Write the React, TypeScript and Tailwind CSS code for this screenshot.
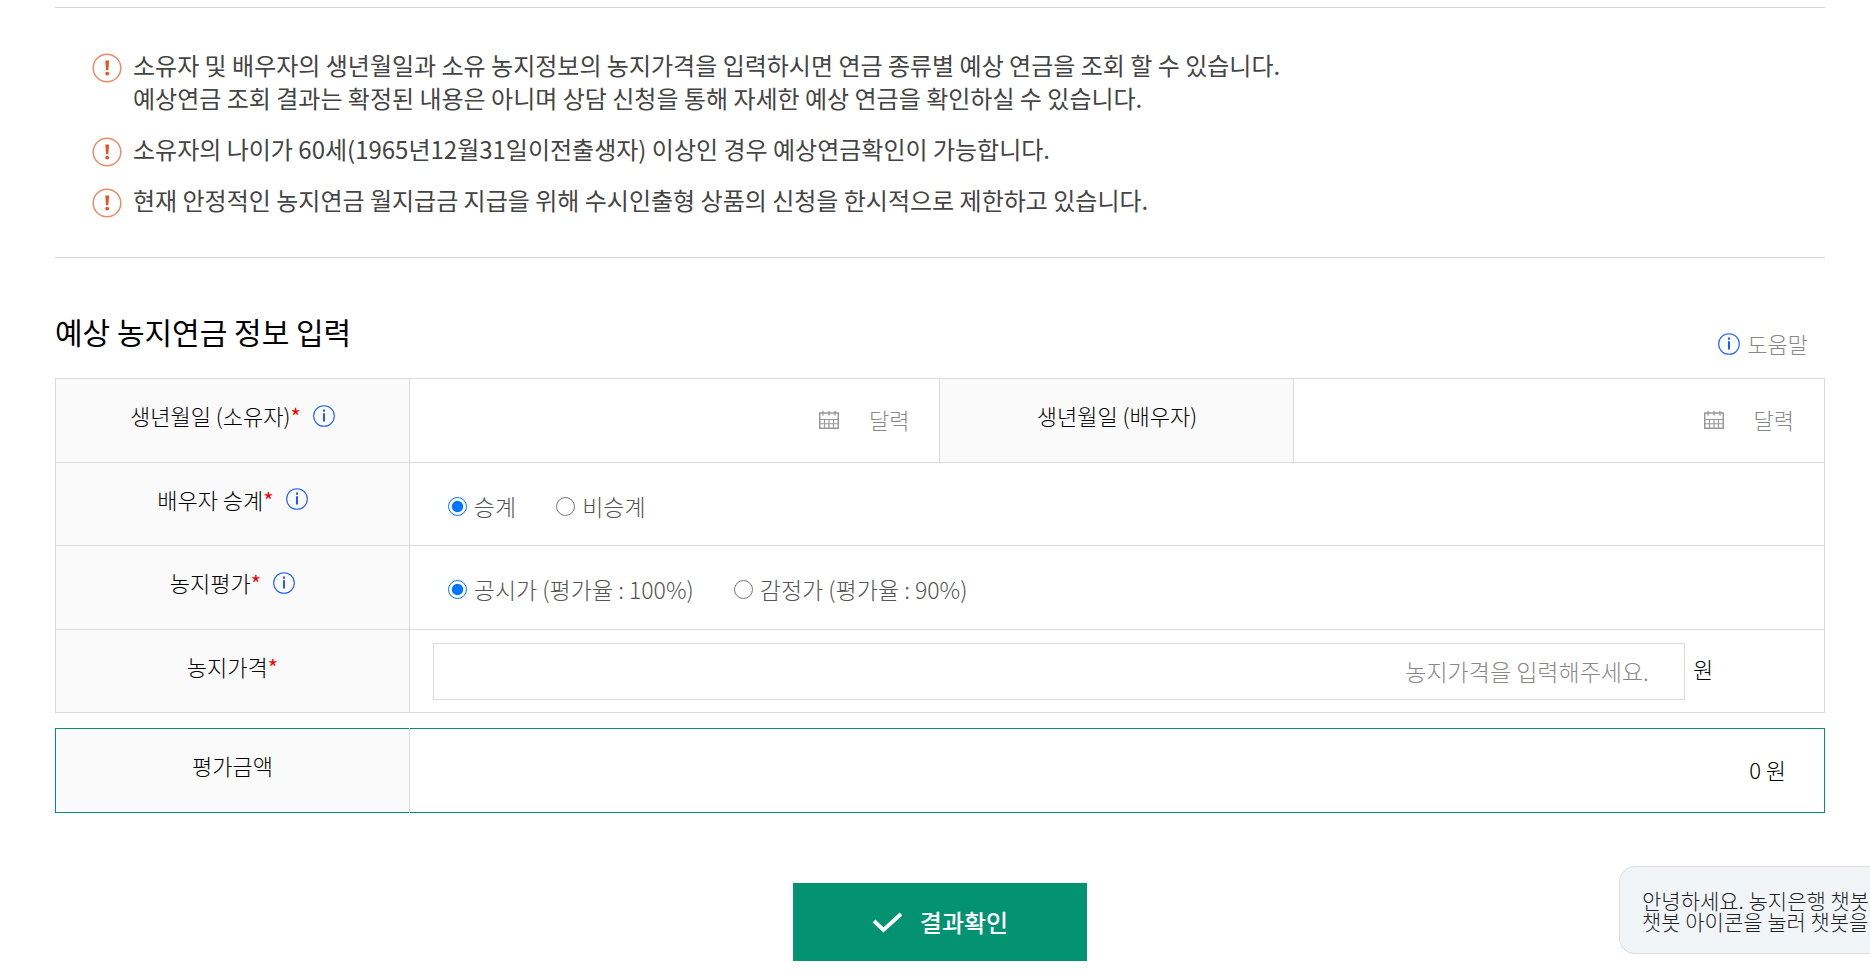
import { useState } from "react";

const notices = [
  [
    "소유자 및 배우자의 생년월일과 소유 농지정보의 농지가격을 입력하시면 연금 종류별 예상 연금을 조회 할 수 있습니다.",
    "예상연금 조회 결과는 확정된 내용은 아니며 상담 신청을 통해 자세한 예상 연금을 확인하실 수 있습니다.",
  ],
  ["소유자의 나이가 60세(1965년12월31일이전출생자) 이상인 경우 예상연금확인이 가능합니다."],
  ["현재 안정적인 농지연금 월지급금 지급을 위해 수시인출형 상품의 신청을 한시적으로 제한하고 있습니다."],
];

function AlertIcon() {
  return (
    <svg viewBox="0 0 30 30" className="mt-[5px] size-[30px] shrink-0" aria-hidden="true">
      <circle cx="15" cy="15" r="13.8" fill="none" stroke="#ee8a68" strokeWidth="1.5" />
      <path d="M13.3 7.5h3.8l-.8 9.8h-2.2z" fill="#e8501e" />
      <circle cx="15.2" cy="20.6" r="1.9" fill="#e8501e" />
    </svg>
  );
}

function InfoIcon() {
  return (
    <svg viewBox="0 0 22 22" className="size-[22px] shrink-0" aria-hidden="true">
      <circle cx="11" cy="11" r="10.3" fill="none" stroke="#1a5cff" strokeWidth="1.1" />
      <path d="M10 4.5h2v2.2h-2zM10 8.2h2v8.3h-2z" fill="#1a5cff" />
    </svg>
  );
}

function CalendarIcon() {
  return (
    <svg viewBox="0 0 20 18" className="h-[18px] w-5" fill="none" stroke="#999" aria-hidden="true">
      <path d="M.75 2h18.5v15.25H.75z" strokeWidth="1.5" />
      <path d="M1 8.5h18M1 12.75h18M5.5 8.5v9M10 8.5v9M14.5 8.5v9" strokeWidth="1.2" />
      <path d="M4 0v4.5M10 0v4.5M16 0v4.5" strokeWidth="1.4" />
    </svg>
  );
}

function Th({ label, required, info }: { label: string; required?: boolean; info?: boolean }) {
  return (
    <th scope="row" className="border border-[#dadada] bg-[#fafafa] px-2 pb-[10px] font-light text-black">
      <div className="flex items-center justify-center">
        <span>{label}</span>
        {required && <span className="font-normal text-[#f00]">*</span>}
        {info && (
          <button type="button" aria-label={`${label} 도움말`} className="ml-3">
            <InfoIcon />
          </button>
        )}
      </div>
    </th>
  );
}

function DateCell({ label }: { label: string }) {
  return (
    <td className="border border-[#dadada] pb-[2px]">
      <div className="flex items-center pr-[30px] pl-6">
        <input type="text" aria-label={label} className="h-14 min-w-0 flex-1 bg-transparent outline-none" />
        <button type="button" className="flex items-center gap-[30px] font-light text-[#888]">
          <CalendarIcon />
          달력
        </button>
      </div>
    </td>
  );
}

function RadioGroup({ name, options }: { name: string; options: string[] }) {
  const [value, setValue] = useState(options[0]);
  return (
    <td colSpan={3} className="border border-[#dadada] pt-1 pl-[38px] text-[23px] font-light text-[#555]">
      <div className="flex items-center gap-10">
        {options.map((option) => (
          <label key={option} className="flex items-center gap-[7px]">
            <input
              type="radio"
              name={name}
              checked={value === option}
              onChange={() => setValue(option)}
              className="size-[19px]"
            />
            {option}
          </label>
        ))}
      </div>
    </td>
  );
}

export default function App() {
  return (
    <div className="relative overflow-hidden bg-white pt-[7px] pr-[45px] pb-[17px] pl-[55px] font-['Noto_Sans_CJK_KR',sans-serif] text-[22px] leading-[33px] text-black">
      <ul className="flex flex-col gap-[18px] border-y border-[#d5d5d5] pt-[40px] pr-8 pb-[41px] pl-[37px] text-2xl leading-[33px] text-[#444]">
        {notices.map((lines) => (
          <li key={lines[0]} className="flex h-auto gap-[11px]">
            <div className="h-[33px]">
              <AlertIcon />
            </div>
            <p>
              {lines.map((line) => (
                <span key={line} className="block">{line}</span>
              ))}
            </p>
          </li>
        ))}
      </ul>

      <div className="mt-[51px] flex items-start justify-between">
        <h2 className="text-3xl leading-[44px] font-normal">예상 농지연금 정보 입력</h2>
        <button type="button" className="mt-[18px] mr-[17px] flex items-center gap-[7px] font-light text-[#888]">
          <InfoIcon />
          도움말
        </button>
      </div>

      <table className="mt-[18px] w-full table-fixed border-collapse">
        <colgroup>
          <col className="w-1/5" />
          <col className="w-3/10" />
          <col className="w-1/5" />
          <col className="w-3/10" />
        </colgroup>
        <tbody>
          <tr className="h-[84px]">
            <Th label="생년월일 (소유자)" required info />
            <DateCell label="생년월일 (소유자)" />
            <Th label="생년월일 (배우자)" />
            <DateCell label="생년월일 (배우자)" />
          </tr>
          <tr className="h-[83px]">
            <Th label="배우자 승계" required info />
            <RadioGroup name="succession" options={["승계", "비승계"]} />
          </tr>
          <tr className="h-[84px]">
            <Th label="농지평가" required info />
            <RadioGroup name="valuation" options={["공시가 (평가율 : 100%)", "감정가 (평가율 : 90%)"]} />
          </tr>
          <tr className="h-[83px]">
            <Th label="농지가격" required />
            <td colSpan={3} className="border border-[#dadada] pl-[23px]">
              <div className="flex items-center gap-2">
                <input
                  type="text"
                  aria-label="농지가격"
                  placeholder="농지가격을 입력해주세요."
                  className="h-[57px] w-9/10 border border-[#dadada] pr-[35px] text-right text-[23px] font-light outline-none placeholder:text-[#888]"
                />
                <span className="pb-[6px] font-light">원</span>
              </div>
            </td>
          </tr>
        </tbody>
      </table>

      <table className="mt-[15px] w-full table-fixed border-collapse border border-[#009270]">
        <colgroup>
          <col className="w-1/5" />
          <col className="w-4/5" />
        </colgroup>
        <tbody>
          <tr className="h-[84px]">
            <th scope="row" className="border-r border-[#dadada] bg-[#fafafa] pb-[10px] font-light">평가금액</th>
            <td className="pr-[38px] pb-[2px] text-right font-light">0 원</td>
          </tr>
        </tbody>
      </table>

      <div className="mt-[70px] flex justify-center">
        <button type="button" className="flex h-[78px] w-[294px] items-center justify-center gap-[18px] bg-[#049372] text-2xl font-medium text-white">
          <svg viewBox="0 0 30 22" className="h-[22px] w-[30px]" fill="none" stroke="#fff" strokeWidth="3.8" aria-hidden="true">
            <path d="M2 10l9.5 9L29 3" />
          </svg>
          결과확인
        </button>
      </div>

      <aside className="absolute right-0 bottom-6 w-[251px] overflow-hidden rounded-l-2xl border border-r-0 border-[#dcdfe2] bg-[#f1f5f8] pt-[23px] pb-[21px] pl-[22px] text-[21px] leading-[21px] font-light whitespace-nowrap text-[#222]">
        <p>안녕하세요. 농지은행 챗봇</p>
        <p>챗봇 아이콘을 눌러 챗봇을</p>
      </aside>
    </div>
  );
}
